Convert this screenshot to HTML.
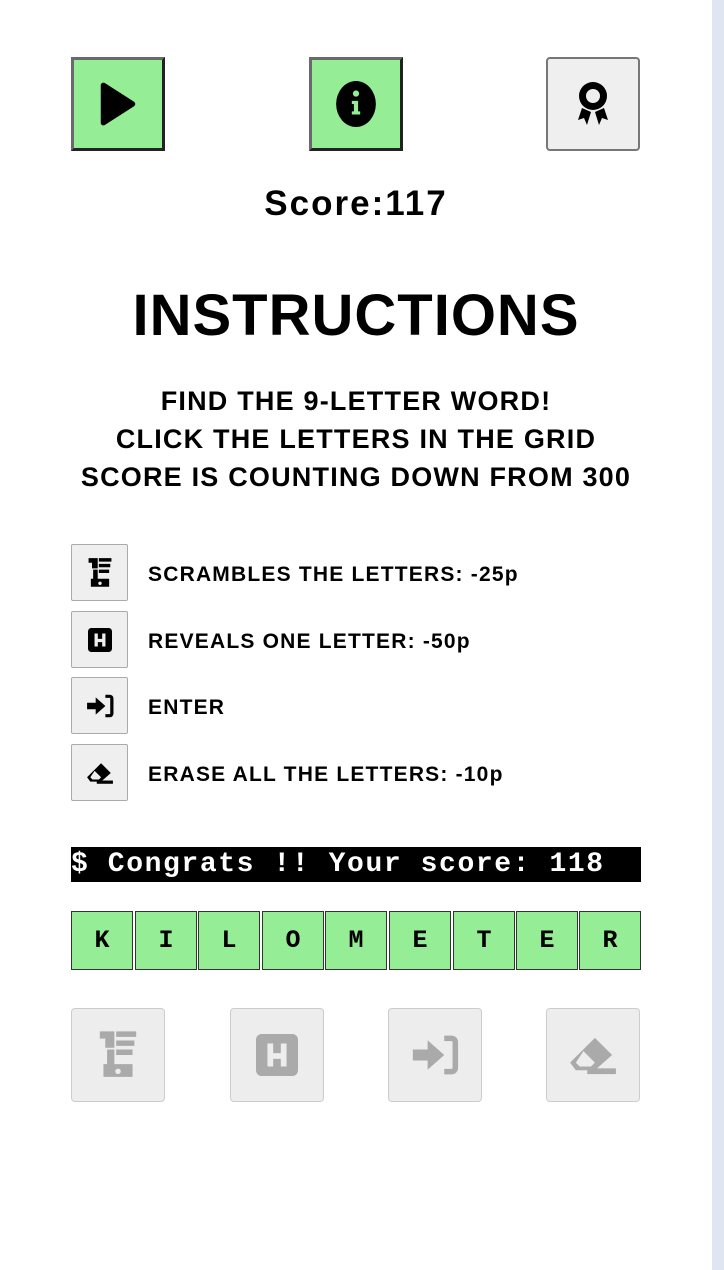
<!DOCTYPE html>
<html><head><style>
body{margin:0;width:724px;height:1270px;background:#fff;position:relative;overflow:hidden;font-family:"Liberation Sans",sans-serif}
.sb{position:absolute;left:712px;top:0;width:12px;height:1270px;background:#dfe6f2}
.tb{position:absolute;top:57px;width:94px;height:94px;box-sizing:border-box;display:flex;align-items:center;justify-content:center}
.g{background:#95ed95;border:3px solid;border-color:#6a6a6a #222 #222 #6a6a6a}
.gr{background:#efefef;border:2px solid #777;border-radius:4px}
.c{position:absolute;left:0;width:712px;text-align:center;font-weight:bold;color:#000}
.ib{position:absolute;left:71px;width:57px;height:57px;box-sizing:border-box;background:#efefef;border:1px solid #aaa;border-radius:2px;display:flex;align-items:center;justify-content:center}
.it{position:absolute;left:148px;font-weight:bold;font-size:21px;letter-spacing:1.2px}
.bar{position:absolute;left:71px;top:847px;width:570px;height:35px;background:#000;color:#fff;font-family:"Liberation Mono",monospace;font-weight:bold;font-size:28px;letter-spacing:1.6px;line-height:35px;white-space:pre}
.t{position:absolute;top:911px;width:62px;height:59px;box-sizing:border-box;background:#95ed95;border:1px solid #333;font-family:"Liberation Mono",monospace;font-weight:bold;font-size:25px;line-height:57px;text-align:center}
.bb{position:absolute;top:1008px;width:94px;height:94px;box-sizing:border-box;background:#ededed;border:1px solid #ccc;border-radius:4px;display:flex;align-items:center;justify-content:center}
</style></head><body>
<div class="sb"></div>
<div class="tb g" style="left:71px"><svg width="44" height="46" viewBox="0 0 40 44"><path d="M6 4 L34 22 L6 40 Z" fill="#000" stroke="#000" stroke-width="5" stroke-linejoin="round"/></svg></div>
<div class="tb g" style="left:309px"><svg width="44" height="46" viewBox="0 0 40 44"><ellipse cx="20" cy="22" rx="19" ry="22" fill="#000"/><circle cx="20" cy="12" r="3" fill="#95ed95"/><path d="M16 19h6v10h2v3h-8v-3h2v-7h-2z" fill="#95ed95"/></svg></div>
<div class="tb gr" style="left:546px"><svg width="34" height="48" viewBox="0 0 34 48"><circle cx="17" cy="16" r="14" fill="#000"/><circle cx="17" cy="16" r="7" fill="#efefef"/><path d="M6 28 L2 40 L8 38 L11 45 L15 32 Z M28 28 L32 40 L26 38 L23 45 L19 32 Z" fill="#000"/></svg></div>
<div class="c" style="top:184px;font-size:35px;letter-spacing:2px">Score:117</div>
<div class="c" style="top:282px;font-size:58px;letter-spacing:1px">INSTRUCTIONS</div>
<div class="c" style="top:382px;font-size:27px;line-height:38px;letter-spacing:1.2px">FIND THE 9-LETTER WORD!<br>CLICK THE LETTERS IN THE GRID<br>SCORE IS COUNTING DOWN FROM 300</div>
<div class="ib" style="top:544px"><svg width="26" height="32" viewBox="0 0 22 28"><path d="M1 1h8v9H4v-5H1z M10 1h11v3H10z M10 6h10v3H10z M10 11h9v3H10z M5 11h4v8H5z M3 19h16v7H3z" fill="#000"/><circle cx="11" cy="23" r="1.5" fill="#efefef"/></svg></div>
<div class="it" style="top:563px">SCRAMBLES THE LETTERS: -25p</div>
<div class="ib" style="top:611px"><svg width="24" height="24" viewBox="0 0 22 22"><rect width="22" height="22" rx="3" fill="#000"/><path d="M6 5h3v5h4V5h3v12h-3v-4H9v4H6z" fill="#efefef"/></svg></div>
<div class="it" style="top:630px">REVEALS ONE LETTER: -50p</div>
<div class="ib" style="top:677px"><svg width="28" height="24" viewBox="0 0 26 22"><path d="M1 8h8V3l9 8-9 8v-5H1z" fill="#000"/><path d="M18 2h4a2 2 0 0 1 2 2v14a2 2 0 0 1-2 2h-4" fill="none" stroke="#000" stroke-width="3"/></svg></div>
<div class="it" style="top:696px">ENTER</div>
<div class="ib" style="top:744px"><svg width="28" height="24" viewBox="0 0 26 22"><path d="M14 2 L23 11 L14 19 L4 19 L1 15 Z" fill="#000"/><path d="M8 9 L14 15 L12 17 L6 17 L4 15 Z" fill="#efefef"/><rect x="10" y="18" width="15" height="3" fill="#000"/></svg></div>
<div class="it" style="top:763px">ERASE ALL THE LETTERS: -10p</div>
<div class="bar">$ Congrats !! Your score: 118</div>
<div class="t" style="left:71px">K</div><div class="t" style="left:135px">I</div><div class="t" style="left:198px">L</div><div class="t" style="left:262px">O</div><div class="t" style="left:325px">M</div><div class="t" style="left:389px">E</div><div class="t" style="left:453px">T</div><div class="t" style="left:516px">E</div><div class="t" style="left:579px">R</div>
<div class="bb" style="left:71px"><svg width="40" height="56" viewBox="0 0 22 28"><path d="M1 1h8v9H4v-5H1z M10 1h11v3H10z M10 6h10v3H10z M10 11h9v3H10z M5 11h4v8H5z M3 19h16v7H3z" fill="#aaa"/><circle cx="11" cy="23" r="1.5" fill="#ededed"/></svg></div>
<div class="bb" style="left:230px"><svg width="42" height="42" viewBox="0 0 22 22"><rect width="22" height="22" rx="3" fill="#aaa"/><path d="M6 5h3v5h4V5h3v12h-3v-4H9v4H6z" fill="#ededed"/></svg></div>
<div class="bb" style="left:388px"><svg width="48" height="42" viewBox="0 0 26 22"><path d="M1 8h8V3l9 8-9 8v-5H1z" fill="#aaa"/><path d="M18 2h4a2 2 0 0 1 2 2v14a2 2 0 0 1-2 2h-4" fill="none" stroke="#aaa" stroke-width="3"/></svg></div>
<div class="bb" style="left:546px"><svg width="50" height="42" viewBox="0 0 26 22"><path d="M14 2 L23 11 L14 19 L4 19 L1 15 Z" fill="#aaa"/><path d="M8 9 L14 15 L12 17 L6 17 L4 15 Z" fill="#ededed"/><rect x="10" y="18" width="15" height="3" fill="#aaa"/></svg></div>
</body></html>
